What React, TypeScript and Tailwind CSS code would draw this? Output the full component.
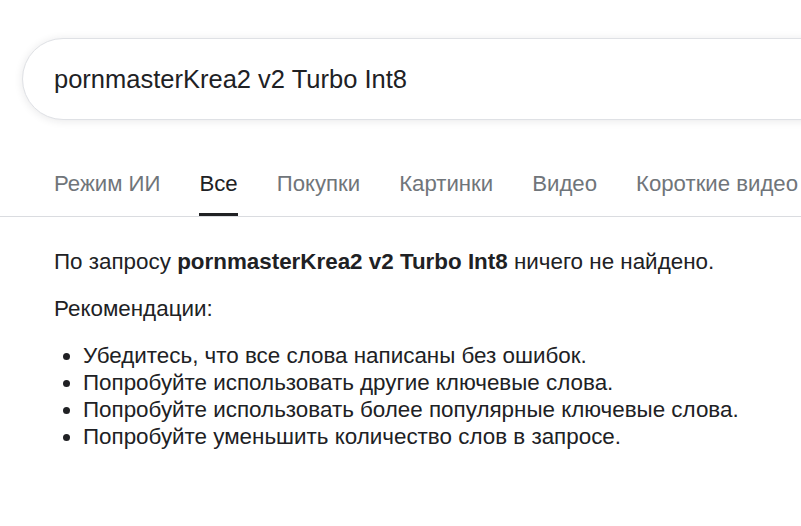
const tabs = ['Режим ИИ', 'Все', 'Покупки', 'Картинки', 'Видео', 'Короткие видео'];

const tips = [
  'Убедитесь, что все слова написаны без ошибок.',
  'Попробуйте использовать другие ключевые слова.',
  'Попробуйте использовать более популярные ключевые слова.',
  'Попробуйте уменьшить количество слов в запросе.',
];

export default function App() {
  const query = 'pornmasterKrea2 v2 Turbo Int8';

  return (
    <div className="w-[801px] h-[526px] overflow-hidden bg-white font-['Liberation_Sans',Arial,sans-serif] text-[#202124]">
      {/* Search box */}
      <div className="pt-[38px] pl-[22px]">
        <div className="flex items-center w-[900px] h-[82px] rounded-full border border-[#dfe1e5] bg-white shadow-[0_1px_8px_rgba(32,33,36,0.1)] pl-[31px]">
          <span className="text-[25.5px] text-[#202124]">{query}</span>
        </div>
      </div>

      {/* Tabs */}
      <div className="mt-[50px] border-b border-[#dadce0]">
        <div className="flex gap-[39px] pl-[54px] whitespace-nowrap">
          {tabs.map((t, i) => (
            <div
              key={t}
              className={
                i === 1
                  ? 'pb-[15px] border-b-[3px] border-[#202124] text-[22.2px] leading-[28px] text-[#202124]'
                  : 'pb-[18px] text-[22.2px] leading-[28px] text-[#70757a]'
              }
            >
              {t}
            </div>
          ))}
        </div>
      </div>

      {/* No results message */}
      <div className="pl-[54px] pt-[31px] text-[22.4px] leading-[27px] text-[#202124]">
        <p>
          По запросу <b>{query}</b> ничего не найдено.
        </p>
        <p className="mt-[20px]">Рекомендации:</p>
        <ul className="mt-[20px] list-disc pl-[29px]">
          {tips.map((t) => (
            <li key={t}>{t}</li>
          ))}
        </ul>
      </div>
    </div>
  );
}
